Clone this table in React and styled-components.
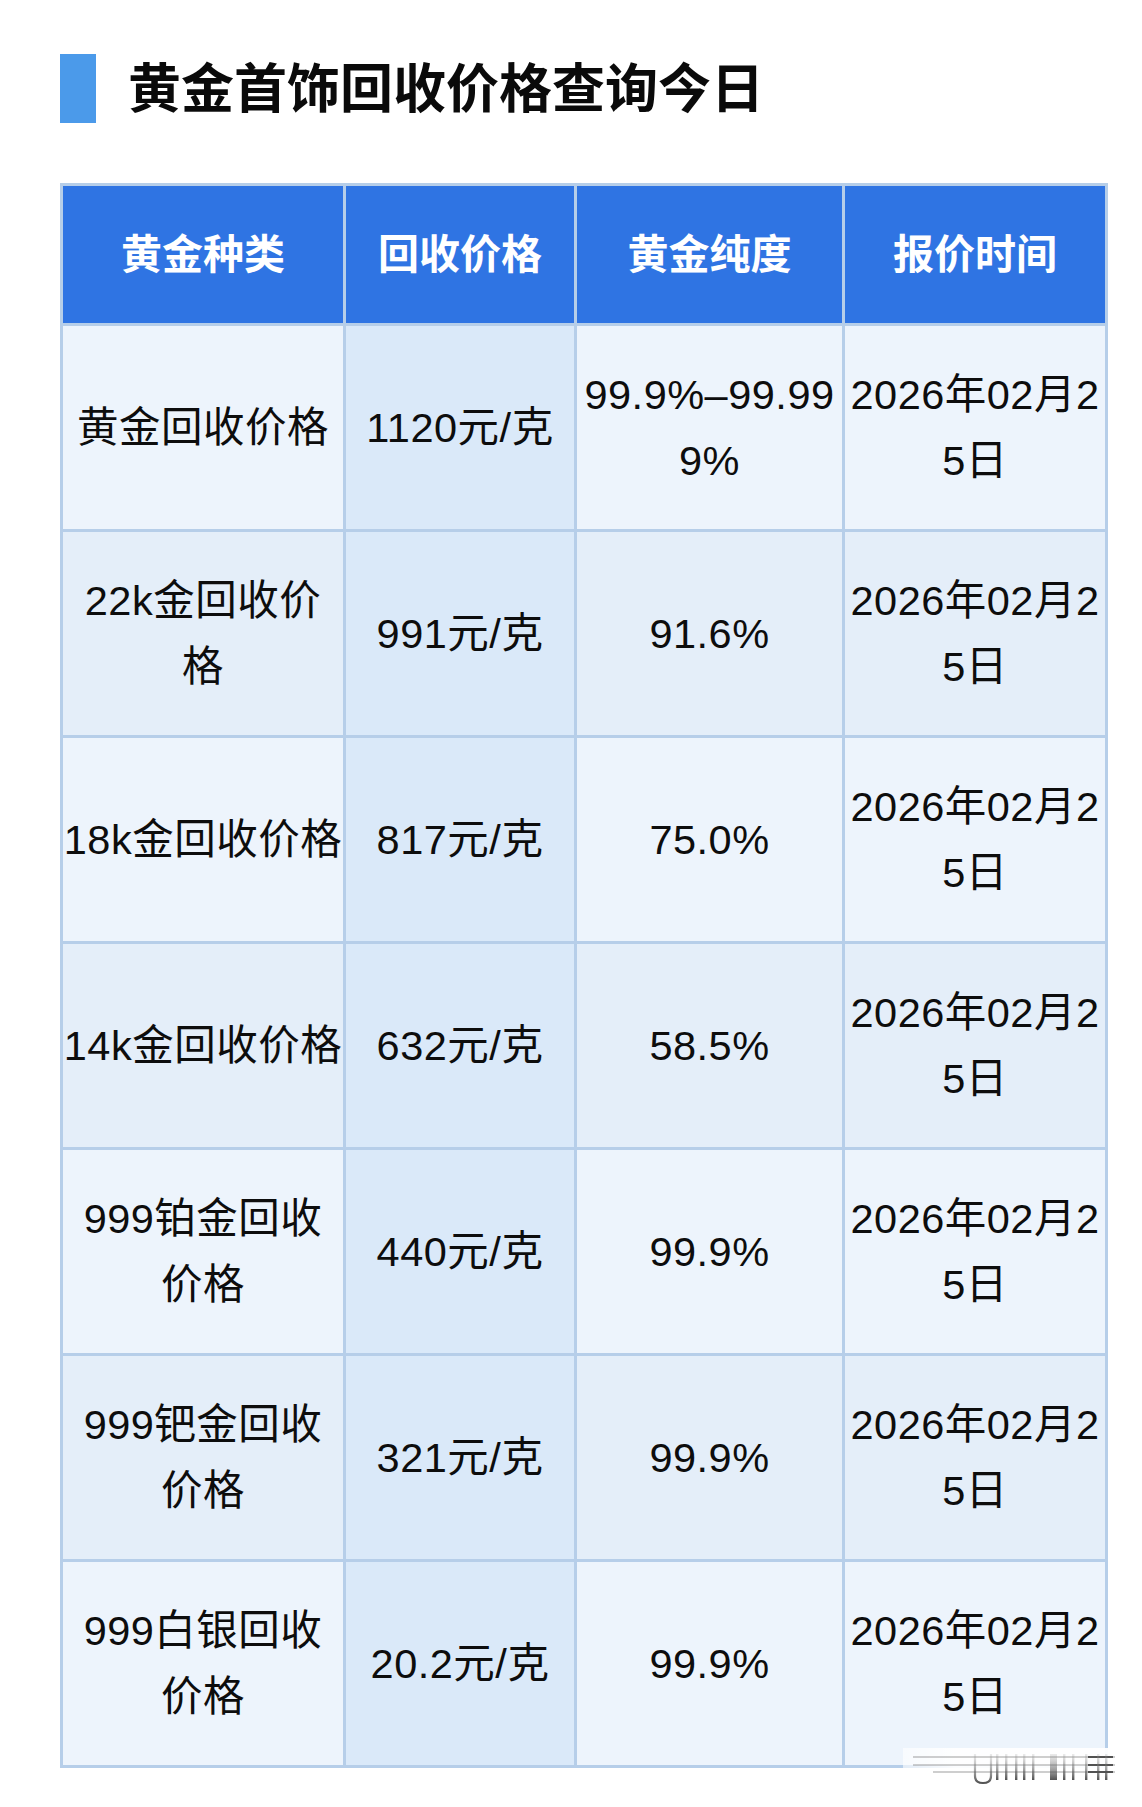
import React from 'react';
import styled, { createGlobalStyle } from 'styled-components';

const GlobalStyle = createGlobalStyle`
  html, body { margin: 0; padding: 0; background: #ffffff; }
  body { font-family: "Liberation Sans", "Noto Sans CJK SC", sans-serif; color: #111; }
`;

const Page = styled.div`
  width: 1142px;
  min-height: 1807px;
  padding: 54px 0 0 60px;
  box-sizing: border-box;
  background: #ffffff;
`;

const TitleRow = styled.div`
  display: flex;
  align-items: center;
  gap: 32px;
  height: 69px;
  margin-bottom: 60px;
`;

const TitleBar = styled.div`
  width: 36px;
  height: 69px;
  background: #4b9aea;
`;

const Title = styled.h1`
  margin: 0;
  padding-bottom: 6px;
  font-family: "Noto Sans CJK SC", sans-serif;
  font-weight: 700;
  font-size: 53px;
  line-height: 63px;
  color: #0a0a0a;
`;

const TableWrap = styled.div`
  position: relative;
  width: 1048px;
`;

const Table = styled.table`
  width: 1048px;
  table-layout: fixed;
  border-collapse: separate;
  border-spacing: 3px;
  background: #b6cee9;
`;

const HeadCell = styled.th`
  height: 137px;
  padding: 0 0 8px;
  box-sizing: border-box;
  background: #2f74e3;
  color: #ffffff;
  font-family: "Noto Sans CJK SC", sans-serif;
  font-weight: 700;
  font-size: 41px;
  line-height: 50px;
  text-align: center;
  vertical-align: middle;
`;

const Cell = styled.td`
  height: 203px;
  padding: 0;
  background: ${p => (p.$price ? '#dae9f9' : p.$even ? '#e4eef9' : '#edf4fc')};
  font-size: 41.5px;
  line-height: 66px;
  letter-spacing: 0.5px;
  text-align: center;
  vertical-align: middle;
  color: #0d0d0d;
  white-space: nowrap;
`;

const Line = styled.span`
  display: block;
`;

const Watermark = styled.svg`
  position: absolute;
  left: 843px;
  top: 1565px;
  width: 212px;
  height: 38px;
  pointer-events: none;
`;

const columns = [
  { key: 'name', label: '黄金种类', width: 280 },
  { key: 'price', label: '回收价格', width: 228 },
  { key: 'purity', label: '黄金纯度', width: 265 },
  { key: 'date', label: '报价时间', width: 260 },
];

const DATE = ['2026年02月2', '5日'];

const rows = [
  { name: ['黄金回收价格'], price: ['1120元/克'], purity: ['99.9%–99.99', '9%'], date: DATE },
  { name: ['22k金回收价', '格'], price: ['991元/克'], purity: ['91.6%'], date: DATE },
  { name: ['18k金回收价格'], price: ['817元/克'], purity: ['75.0%'], date: DATE },
  { name: ['14k金回收价格'], price: ['632元/克'], purity: ['58.5%'], date: DATE },
  { name: ['999铂金回收', '价格'], price: ['440元/克'], purity: ['99.9%'], date: DATE },
  { name: ['999钯金回收', '价格'], price: ['321元/克'], purity: ['99.9%'], date: DATE },
  { name: ['999白银回收', '价格'], price: ['20.2元/克'], purity: ['99.9%'], date: DATE },
];

function WatermarkMark() {
  const thin = [93, 102, 112, 120, 129, 160, 169, 182, 194, 202];
  return (
    <Watermark viewBox="0 0 212 38">
      <defs>
        <linearGradient id="fade" x1="0" x2="1" y1="0" y2="0">
          <stop offset="0" stopColor="#ffffff" stopOpacity="0.6" />
          <stop offset="0.25" stopColor="#ffffff" stopOpacity="0.95" />
          <stop offset="1" stopColor="#ffffff" stopOpacity="0.95" />
        </linearGradient>
        <linearGradient id="bar" x1="0" x2="0" y1="0" y2="1">
          <stop offset="0" stopColor="#9a9a9a" stopOpacity="0.2" />
          <stop offset="1" stopColor="#333" stopOpacity="0.85" />
        </linearGradient>
      </defs>
      <rect x="0" y="0" width="212" height="38" fill="url(#fade)" />
      <g stroke="#8a8a8a" strokeWidth="1.4" opacity="0.55">
        <line x1="10" y1="9" x2="212" y2="9" />
        <line x1="10" y1="17" x2="212" y2="17" />
        <line x1="30" y1="24" x2="212" y2="24" />
      </g>
      <g stroke="#333" strokeWidth="2" opacity="0.8">
        <line x1="185" y1="9" x2="210" y2="9" />
        <line x1="185" y1="17" x2="210" y2="17" />
        <line x1="185" y1="24" x2="210" y2="24" />
      </g>
      <path d="M72 6 V28 Q72 35 80 35 Q88 35 88 28 V6" fill="none" stroke="url(#bar)" strokeWidth="2.2" />
      {thin.map(x => (
        <rect key={x} x={x} y="6" width="2.4" height="26" fill="url(#bar)" />
      ))}
      <rect x="147" y="6" width="7" height="26" fill="url(#bar)" />
    </Watermark>
  );
}

export default function App() {
  return (
    <>
      <GlobalStyle />
      <Page>
        <TitleRow>
          <TitleBar />
          <Title>黄金首饰回收价格查询今日</Title>
        </TitleRow>
        <TableWrap>
          <Table>
            <colgroup>
              {columns.map(c => (
                <col key={c.key} style={{ width: c.width }} />
              ))}
            </colgroup>
            <thead>
              <tr>
                {columns.map(c => (
                  <HeadCell key={c.key}>{c.label}</HeadCell>
                ))}
              </tr>
            </thead>
            <tbody>
              {rows.map((r, i) => (
                <tr key={i}>
                  {columns.map(c => (
                    <Cell key={c.key} $price={c.key === 'price'} $even={i % 2 === 1}>
                      {r[c.key].map((l, j) => (
                        <Line key={j}>{l}</Line>
                      ))}
                    </Cell>
                  ))}
                </tr>
              ))}
            </tbody>
          </Table>
          <WatermarkMark />
        </TableWrap>
      </Page>
    </>
  );
}
